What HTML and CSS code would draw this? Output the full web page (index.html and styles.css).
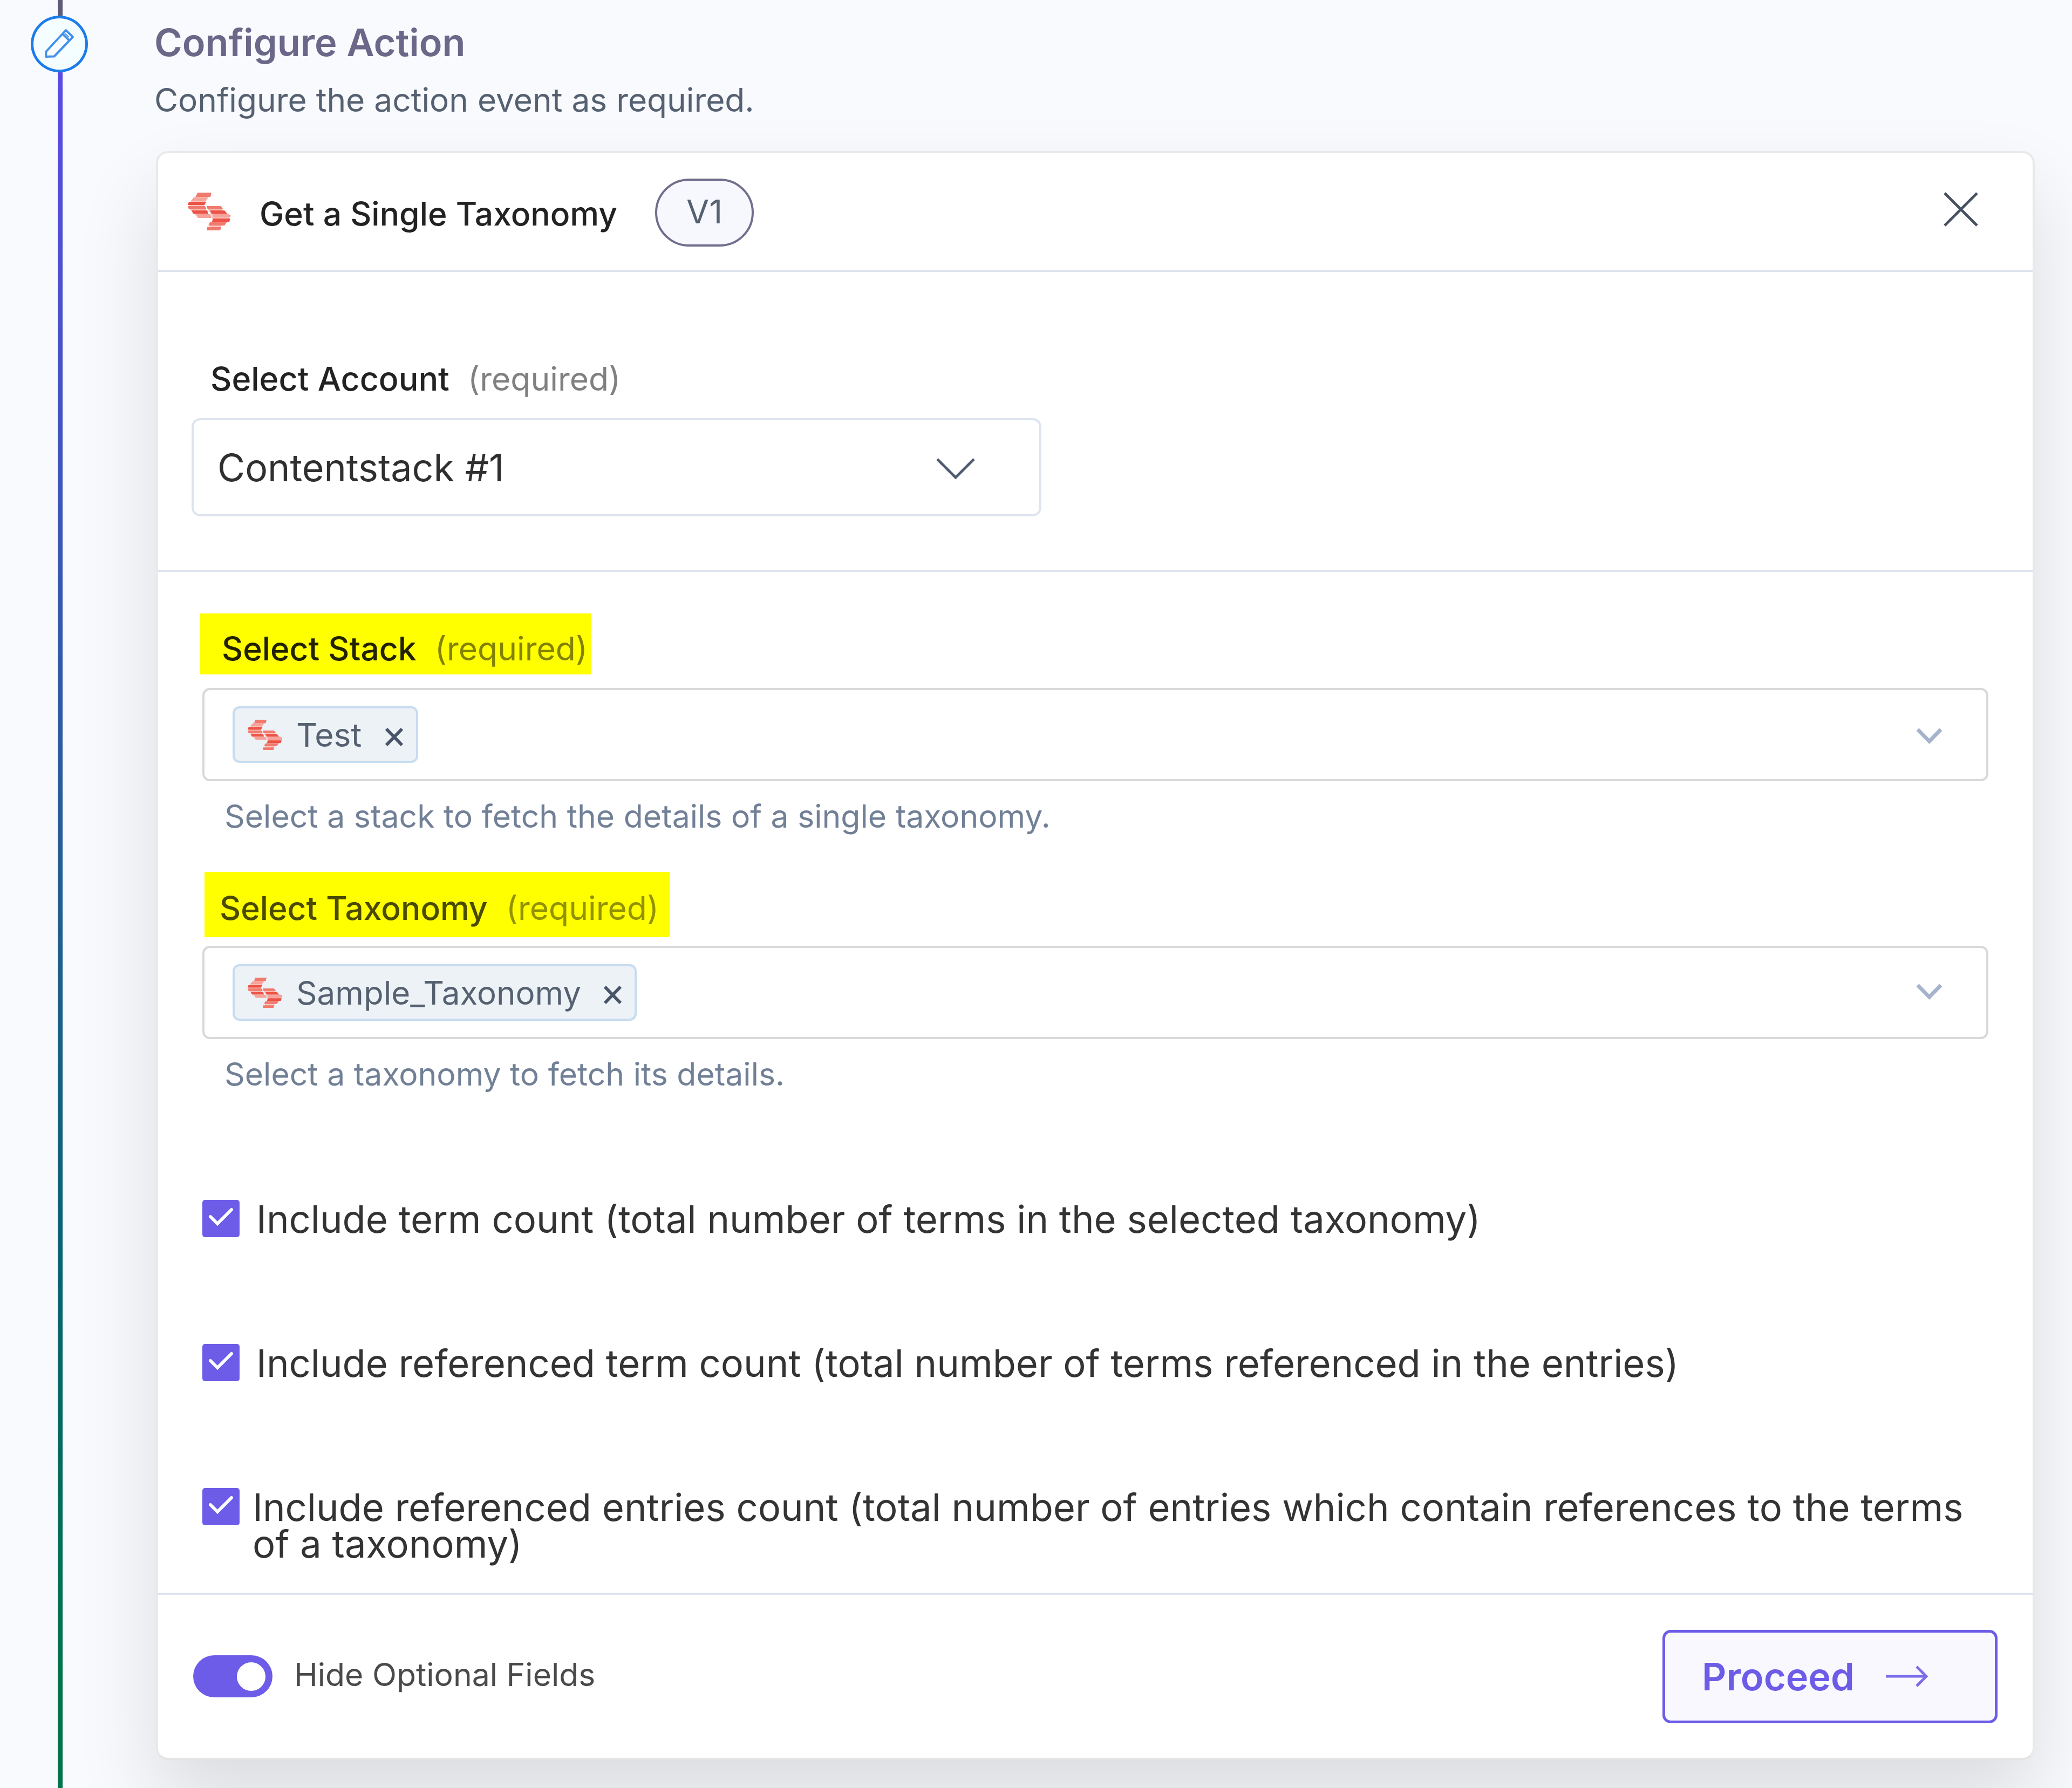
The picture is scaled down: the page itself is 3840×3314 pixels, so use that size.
FILE: index.html
```html
<!DOCTYPE html>
<html lang="en">
<head>
    <meta charset="UTF-8">
    <meta name="viewport" content="width=device-width, initial-scale=1.0">
    <title>Configure Action</title>
    <link rel="stylesheet" href="styles.css">
</head>
<body>
    <svg class="sprite">
        <symbol id="logo" viewBox="0 0 79 70">
            <path fill="#f9c4be" d="M18 2h24L30 24l2 4 6 14v4H18L3 30V20zM35 27h24l18 20v5L62 62 60 68H38l8-18-3-10z"/>
            <path fill="#f17a6e" d="M18 0h26l-2 8H15zM0 25h32l3 6H2zM35 25h26l5 6H37zM47 41h32v5H49zM41 55h31l-4 6H38zM36 64h26l-2 6H36z"/>
            <path fill="#f6a39b" d="M11 9h26l-5 6H6zM16 40h26l2 7H19zM46 39h30l3 7H48z"/>
            <path fill="#ec5245" d="M2 17h32l-3 6H0zM7 33h29l2 6H10zM41 33h27l5 6H44zM47 48h32l-2 6H45z"/>
        </symbol>
        <symbol id="chevron" viewBox="0 0 49 32">
            <path d="M3 4l21.500 22L46 4" fill="none" stroke="#a5b4cc" stroke-width="7"/>
        </symbol>
        <symbol id="remove" viewBox="0 0 35 36">
            <path d="M3 3l29 30M32 3L3 33" fill="none" stroke="#475569" stroke-width="6"/>
        </symbol>
        <symbol id="check" viewBox="0 0 69 69">
            <path d="M15 31l13 13 26-26" fill="none" stroke="#fff" stroke-width="6" stroke-linecap="round"/>
        </symbol>
    </svg>

    <div class="page">
        <div class="rail">
            <div class="line line-top"></div>
            <div class="step">
                <svg width="60" height="60" viewBox="0 0 60 60" fill="none" stroke="#4390ec" stroke-width="4" stroke-linejoin="round">
                    <path fill="#fafdff" d="M5 53l.500-9.500L42 4l13 12.500-34.500 36z"/>
                    <path d="M35 10l13.500 13"/>
                    <path d="M40 10l8 7" stroke-width="2"/>
                </svg>
            </div>
            <div class="line line-bottom"></div>
        </div>

        <div class="main">
            <h1 class="title">Configure Action</h1>
            <p class="subtitle">Configure the action event as required.</p>

            <div class="card">
                <div class="card-header">
                    <svg class="logo" width="79" height="70"><use href="#logo"/></svg>
                    <h2 class="card-title">Get a Single Taxonomy</h2>
                    <span class="version">V1</span>
                    <svg class="close" width="64" height="64" viewBox="0 0 64 64">
                        <path d="M2 2l60 60M62 2L2 62" stroke="#475161" stroke-width="5"/>
                    </svg>
                </div>

                <div class="account">
                    <div class="label account-label">Select Account <span class="required">(required)</span></div>
                    <div class="select">
                        <span>Contentstack #1</span>
                        <svg class="select-arrow" width="72" height="40" viewBox="0 0 72 40">
                            <path d="M2 2l34 34L70 2" fill="none" stroke="#4f5b70" stroke-width="5"/>
                        </svg>
                    </div>
                </div>

                <div class="fields">
                    <div class="label highlight stack-label">Select Stack <span class="required">(required)</span></div>
                    <div class="multi">
                        <div class="chip">
                            <svg width="63" height="58"><use href="#logo"/></svg>
                            <span class="chip-text">Test</span>
                            <svg class="chip-remove" width="35" height="36"><use href="#remove"/></svg>
                        </div>
                        <svg class="arrow" width="49" height="32"><use href="#chevron"/></svg>
                    </div>
                    <p class="help">Select a stack to fetch the details of a single taxonomy.</p>

                    <div class="label highlight taxonomy-label">Select Taxonomy <span class="required">(required)</span></div>
                    <div class="multi">
                        <div class="chip">
                            <svg width="63" height="58"><use href="#logo"/></svg>
                            <span class="chip-text chip-text-long">Sample_Taxonomy</span>
                            <svg class="chip-remove" width="35" height="36"><use href="#remove"/></svg>
                        </div>
                        <svg class="arrow arrow-up" width="49" height="32"><use href="#chevron"/></svg>
                    </div>
                    <p class="help">Select a taxonomy to fetch its details.</p>

                    <div class="options">
                        <div class="option">
                            <svg class="checkbox"><use href="#check"/></svg>
                            <span class="option-text">Include term count (total number of terms in the selected taxonomy)</span>
                        </div>
                        <div class="option">
                            <svg class="checkbox"><use href="#check"/></svg>
                            <span class="option-text">Include referenced term count (total number of terms referenced in the entries)</span>
                        </div>
                        <div class="option option-wrap">
                            <svg class="checkbox"><use href="#check"/></svg>
                            <span class="option-text">Include referenced entries count (total number of entries which contain references to the terms<br>of a taxonomy)</span>
                        </div>
                    </div>
                </div>

                <div class="card-footer">
                    <div class="toggle"><div class="knob"></div></div>
                    <span class="toggle-text">Hide Optional Fields</span>
                    <button class="proceed">
                        Proceed
                        <svg width="78" height="40" viewBox="0 0 78 40" fill="none" stroke="#7b6cea" stroke-width="5">
                            <path d="M0 20h74"/>
                            <path d="M57 2l18 18-18 18"/>
                        </svg>
                    </button>
                </div>
            </div>
        </div>
    </div>
</body>
</html>
```
FILE: styles.css
```css
* {
    box-sizing: border-box;
}
body {
    margin: 0;
    background-color: #f8fafe;
    font-family: 'Inter', Arial, sans-serif;
    overflow: hidden;
}
h1, h2, p {
    margin: 0;
}
svg {
    display: block;
    flex-shrink: 0;
}
.sprite {
    display: none;
}
.page {
    display: flex;
    width: 3840px;
    height: 3314px;
}

/* timeline */
.rail {
    display: flex;
    flex-direction: column;
    width: 286px;
}
.line {
    width: 9px;
    margin-left: 107px;
}
.line-top {
    height: 29px;
    background-color: #5d5b78;
}
.line-bottom {
    flex: 1;
    background: linear-gradient(#5b4be3, #2c5b9f 40%, #08636f 70%, #00734a 94%);
}
.step {
    display: flex;
    align-items: center;
    justify-content: center;
    width: 106px;
    height: 105px;
    margin-left: 57px;
    border: 5px solid #1b7cea;
    border-radius: 50%;
    background-color: #f4fdff;
}

.main {
    width: 3485px;
    padding-top: 37px;
}
.title {
    font-size: 70.3px;
    line-height: 84px;
    font-weight: 600;
    color: #6c6789;
}
.subtitle {
    margin-top: 27px;
    font-size: 60.4px;
    line-height: 74px;
    color: #556070;
}

/* card */
.card {
    height: 2982px;
    margin: 58px 0 0 3px;
    border: 4px solid #e9e9e9;
    border-bottom-color: #e3e4e5;
    border-radius: 22px;
    background-color: #fff;
    box-shadow: 0 75px 150px rgba(0, 0, 0, 0.12);
}
.card-header {
    display: flex;
    align-items: center;
    height: 220px;
    padding: 0 101px 0 55px;
    border-bottom: 4px solid #dde4f0;
}
.card-title {
    margin: 8px 0 0 54px;
    font-size: 60.6px;
    line-height: 74px;
    font-weight: 500;
    color: #222;
}
.version {
    width: 183px;
    height: 126px;
    margin: 4px 0 0 70px;
    border: 4px solid #716d8c;
    border-radius: 63px;
    background-color: #f7f8fd;
    font-size: 61px;
    line-height: 115px;
    text-align: center;
    color: #556070;
}
.close {
    margin: -8px 0 0 auto;
}

.label {
    font-size: 60.6px;
    line-height: 74px;
    font-weight: 500;
    white-space: nowrap;
    color: #222;
}
.required {
    margin-left: 18px;
    font-weight: 400;
    color: #808080;
}
.account {
    height: 556px;
    padding: 161px 0 0 62px;
    border-bottom: 4px solid #dde4f0;
}
.account-label {
    padding-left: 35px;
    font-size: 61px;
}
.account-label .required {
    font-size: 60.6px;
}
.select {
    display: flex;
    align-items: center;
    justify-content: space-between;
    width: 1575px;
    height: 182px;
    margin-top: 36px;
    padding: 0 119px 0 44px;
    border: 4px solid #dde4f0;
    border-radius: 16px;
    font-size: 70px;
    color: #2f2f2f;
}
.select-arrow {
    margin-top: 5px;
}

.fields {
    height: 1896px;
    padding: 77px 82px 0;
    border-bottom: 4px solid #dde4f0;
}
.highlight {
    background-color: #ff0;
    color: #222200;
}
.highlight .required {
    color: #828200;
}
.stack-label {
    width: 724px;
    height: 113px;
    margin-left: -4px;
    padding: 28px 0 0 40px;
}
.taxonomy-label {
    width: 862px;
    height: 121px;
    margin: 68px 0 0 4px;
    padding: 30px 0 0 28px;
    color: #4a4a00;
}
.taxonomy-label .required {
    color: #929200;
}
.multi {
    display: flex;
    align-items: center;
    justify-content: space-between;
    width: 3310px;
    height: 173px;
    margin-top: 25px;
    padding: 0 81px 0 52px;
    border: 4px solid #d9d9d9;
    border-radius: 14px;
}
.taxonomy-label + .multi {
    margin-top: 16px;
}
.chip {
    display: flex;
    align-items: center;
    height: 105px;
    padding: 0 23px 0 24px;
    border: 4px solid #c8dcf0;
    border-radius: 13px;
    background-color: #edf2f7;
}
.chip-text {
    margin: 0 43px 0 27px;
    font-size: 60.5px;
    line-height: 74px;
    color: #556070;
}
.chip-text-long {
    margin-right: 41px;
    font-size: 60.1px;
}
.chip-remove {
    margin-top: 8px;
}
.arrow {
    margin-top: 4px;
}
.arrow-up {
    margin-top: -4px;
}
.help {
    margin: 30px 0 0 41px;
    font-size: 58.9px;
    line-height: 70px;
    color: #718096;
}

.options {
    display: flex;
    flex-direction: column;
    gap: 198px;
    margin-top: 198px;
}
.option {
    display: flex;
    align-items: flex-start;
    gap: 31px;
    height: 69px;
    font-size: 70.5px;
    line-height: 68px;
    white-space: nowrap;
    color: #333;
}
.option-text {
    padding-top: 2px;
}
.option-wrap {
    gap: 24px;
}
.checkbox {
    width: 69px;
    height: 69px;
    border-radius: 5px;
    background-color: #6c5ce7;
}

.card-footer {
    display: flex;
    align-items: center;
    height: 302px;
    padding: 0 65px;
}
.toggle {
    display: flex;
    align-items: center;
    justify-content: flex-end;
    width: 147px;
    height: 78px;
    padding-right: 13px;
    border-radius: 39px;
    background-color: #6c5ce7;
}
.knob {
    width: 53px;
    height: 53px;
    border-radius: 50%;
    background-color: #fff;
}
.toggle-text {
    margin: -8px 0 0 40px;
    font-size: 58.9px;
    color: #4a4a4a;
}
.proceed {
    display: flex;
    align-items: center;
    gap: 58px;
    width: 621px;
    height: 173px;
    margin-left: auto;
    padding: 0 0 0 68px;
    border: 5px solid #6c5ce7;
    border-radius: 15px;
    background-color: #f9f8ff;
    font-family: inherit;
    font-size: 70.4px;
    font-weight: 600;
    color: #6c5ce7;
}
```
